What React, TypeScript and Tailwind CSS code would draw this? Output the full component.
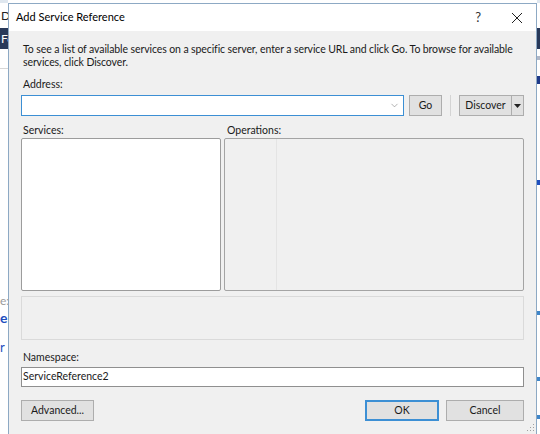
import { ChevronDown } from "lucide-react";

const ui = { fontFamily: 'Lato, "Noto Sans", sans-serif' };

function Button({ children, primary, className }: { children: React.ReactNode; primary?: boolean; className?: string }) {
    return (
        <button
            className={
                "flex items-center justify-center bg-[#e1e1e1] text-[#1a1a1a] " +
                (primary ? "border-2 border-[#3c8fd4] " : "border border-[#adadad] ") +
                (className || "")
            }
        >
            {children}
        </button>
    );
}

function Backdrop() {
    return (
        <div className="absolute inset-0 flex justify-between bg-white">
            <div className="flex w-[8px] flex-col">
                <div className="h-[3px] bg-[#dfe7ef]" />
                <div className="flex h-[25px] items-center pl-[1px] text-[12px] text-[#222]">D</div>
                <div className="flex h-[21px] items-center bg-[#28395a] pl-[1px] text-[12px] text-white">Fo</div>
                <div className="mt-[19px] h-px w-[8px] bg-[#d6d6d6]" />
                <div className="mt-[225px] text-[12px] leading-[14px] text-[#9a9a9a]">e:</div>
                <div className="mt-[2px] text-[14px] font-bold leading-[16px] text-[#1f4fbf]">e</div>
                <div className="mt-[14px] text-[13px] leading-[14px] text-[#1f4fbf]">r</div>
            </div>
            <div className="flex w-[3px] flex-col">
                <div className="h-[3px] bg-[#dfe7ef]" />
                <div className="mt-[25px] h-[21px] bg-[#28395a]" />
                <div className="mt-[7px] h-[4px] bg-[#b0b8c8]" />
                <div className="mt-[16px] h-[8px] bg-[#1f3a8a]" />
                <div className="mt-[96px] h-[5px] bg-[#1f4fbf]" />
                <div className="mt-[126px] h-[4px] bg-[#3f86c9]" />
                <div className="mt-[62px] h-[4px] bg-[#3f86c9]" />
                <div className="mt-[34px] h-[4px] bg-[#3f86c9]" />
            </div>
        </div>
    );
}

export default function App() {
    return (
        <div className="relative h-[434px] w-[540px] overflow-hidden text-[10.5px]" style={ui}>
            <Backdrop />

            {/* dialog window */}
            <div className="absolute left-[8px] top-[3px] flex h-[440px] w-[529px] flex-col border border-[#8da9c4] bg-[#f0f0f0]">
                <div className="flex h-[27px] items-center bg-white pl-[7px] text-[11px] text-black">
                    <span className="flex-1">Add Service Reference</span>
                    <span className="mr-[30px] text-[13px] text-[#333]">?</span>
                    <svg width="12" height="12" viewBox="0 0 12 12" className="mr-[13px]">
                        <path d="M1 1 L11 11 M11 1 L1 11" stroke="#222" strokeWidth="1" />
                    </svg>
                </div>

                <div className="flex flex-col px-[12px] text-[#1a1a1a]">
                    <p className="mt-[12px] whitespace-nowrap pl-[2px] leading-[13px] tracking-[-0.1px]">
                        To see a list of available services on a specific server, enter a service URL and click Go. To browse for available
                        <br />
                        services, click Discover.
                    </p>

                    <label className="mt-[9px] pl-[2px] leading-[13px]">Address:</label>
                    <div className="mt-[4px] flex h-[21px] items-stretch">
                        <div className="flex w-[384px] items-center justify-end border border-[#3c8fd4] bg-white pr-[3px]">
                            <ChevronDown size={11} strokeWidth={1.25} className="text-[#7a7a7a]" />
                        </div>
                        <Button className="ml-[5px] w-[33px]">Go</Button>
                        <div className="mx-[8px] w-px bg-[#d4d4d4]" />
                        <div className="flex border border-[#adadad] bg-[#e1e1e1]">
                            <span className="flex w-[52px] items-center justify-center border-r border-[#adadad]">Discover</span>
                            <span className="flex w-[11px] items-center justify-center">
                                <svg width="7" height="4" viewBox="0 0 7 4">
                                    <path d="M0 0 H7 L3.5 4 Z" fill="#222" />
                                </svg>
                            </span>
                        </div>
                    </div>

                    <div className="mt-[6px] flex">
                        <div className="flex w-[200px] flex-col">
                            <span className="pl-[2px] leading-[16px]">Services:</span>
                            <div className="h-[153px] rounded-[2px] border border-[#9c9c9c] bg-white" />
                        </div>
                        <div className="ml-[3px] flex flex-1 flex-col">
                            <span className="pl-[3px] leading-[16px]">Operations:</span>
                            <div className="flex h-[153px] rounded-[2px] border border-[#a4a4a4] bg-[#f0f0f0]">
                                <div className="w-[52px] border-r border-[#e4e4e4]" />
                            </div>
                        </div>
                    </div>

                    <div className="mt-[5px] h-[44px] border border-[#dadada]" />

                    <label className="mt-[11px] pl-[2px] leading-[13px]">Namespace:</label>
                    <div className="mt-[3px] flex h-[20px] items-center border border-[#8f8f8f] bg-white pl-[1px]">
                        ServiceReference2
                    </div>

                    <div className="mt-[13px] flex h-[21px]">
                        <Button className="w-[73px]">Advanced...</Button>
                        <div className="flex-1" />
                        <Button primary className="w-[74px]">OK</Button>
                        <Button className="ml-[7px] w-[78px]">Cancel</Button>
                    </div>
                </div>

                {/* size grip */}
                <svg width="8" height="8" viewBox="0 0 8 8" className="absolute right-[1px] top-[420px]">
                    <rect x="6" y="0" width="1" height="1" fill="#a0a0a0" />
                    <rect x="3" y="3" width="1" height="1" fill="#a0a0a0" />
                    <rect x="6" y="3" width="1" height="1" fill="#a0a0a0" />
                    <rect x="0" y="6" width="1" height="1" fill="#a0a0a0" />
                    <rect x="3" y="6" width="1" height="1" fill="#a0a0a0" />
                    <rect x="6" y="6" width="1" height="1" fill="#a0a0a0" />
                </svg>
            </div>
        </div>
    );
}
